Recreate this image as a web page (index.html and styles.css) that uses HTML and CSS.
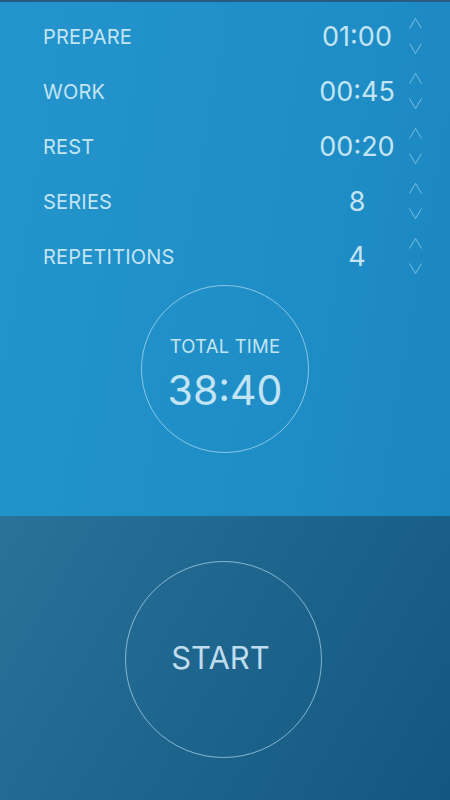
FILE: index.html
```html
<!DOCTYPE html>
<html lang="en">
<head>
    <meta charset="UTF-8">
    <title>Interval Timer</title>
    <link rel="stylesheet" href="styles.css">
</head>
<body>
<div class="app">
    <div class="setup">
        <ul class="rows">
            <li class="row">
                <span class="label">PREPARE</span>
                <span class="value">01:00</span>
                <span class="arrows">
                    <svg class="chev" viewBox="0 0 13 11"><polyline points="0.5,10.5 6.5,0.5 12.5,10.5"/></svg>
                    <svg class="chev" viewBox="0 0 13 11"><polyline points="0.5,0.5 6.5,10.5 12.5,0.5"/></svg>
                </span>
            </li>
            <li class="row">
                <span class="label">WORK</span>
                <span class="value">00:45</span>
                <span class="arrows">
                    <svg class="chev" viewBox="0 0 13 11"><polyline points="0.5,10.5 6.5,0.5 12.5,10.5"/></svg>
                    <svg class="chev" viewBox="0 0 13 11"><polyline points="0.5,0.5 6.5,10.5 12.5,0.5"/></svg>
                </span>
            </li>
            <li class="row">
                <span class="label">REST</span>
                <span class="value">00:20</span>
                <span class="arrows">
                    <svg class="chev" viewBox="0 0 13 11"><polyline points="0.5,10.5 6.5,0.5 12.5,10.5"/></svg>
                    <svg class="chev" viewBox="0 0 13 11"><polyline points="0.5,0.5 6.5,10.5 12.5,0.5"/></svg>
                </span>
            </li>
            <li class="row">
                <span class="label">SERIES</span>
                <span class="value">8</span>
                <span class="arrows">
                    <svg class="chev" viewBox="0 0 13 11"><polyline points="0.5,10.5 6.5,0.5 12.5,10.5"/></svg>
                    <svg class="chev" viewBox="0 0 13 11"><polyline points="0.5,0.5 6.5,10.5 12.5,0.5"/></svg>
                </span>
            </li>
            <li class="row">
                <span class="label">REPETITIONS</span>
                <span class="value">4</span>
                <span class="arrows">
                    <svg class="chev" viewBox="0 0 13 11"><polyline points="0.5,10.5 6.5,0.5 12.5,10.5"/></svg>
                    <svg class="chev" viewBox="0 0 13 11"><polyline points="0.5,0.5 6.5,10.5 12.5,0.5"/></svg>
                </span>
            </li>
        </ul>
        <div class="total">
            <span class="total-label">TOTAL TIME</span>
            <span class="total-value">38:40</span>
        </div>
    </div>
    <div class="launch">
        <a href="javascript:;" class="start">START</a>
    </div>
</div>
</body>
</html>
```

FILE: styles.css
```css
@charset "UTF-8";
/* reset */
body,ul,li{margin:0;padding:0}
ul{list-style:none}
a{text-decoration:none}
body{font-family: Inter, "Liberation Sans", sans-serif;color:#c3e4f5;}

.app{
    width:450px;
    height:800px;
    display:flex;
    flex-direction:column;
    overflow:hidden;
}
.setup{
    height:514px;
    border-top:2px solid #2b5b7c;
    background: linear-gradient(100deg, #2394cc 0%, #1f8ec7 60%, #1b86c0 100%);
    display:flex;
    flex-direction:column;
}
.rows{
    padding-top:7px;
}
.row{
    height:55px;
    display:flex;
    align-items:center;
    padding:0 28px 0 43px;
}
.label{
    flex:1;
    font-size:20px;
    letter-spacing:0.2px;
}
.value{
    width:100px;
    text-align:center;
    font-size:27px;
    margin-top:-1px;
}
.arrows{
    width:13px;
    margin-left:2px;
    display:flex;
    flex-direction:column;
    gap:14px;
    margin-top:-1px;
}
.chev{
    width:13px;
    height:11px;
    display:block;
}
.chev polyline{
    fill:none;
    stroke:rgba(200,232,248,0.55);
    stroke-width:1;
}

.total{
    width:166px;
    height:166px;
    margin:1px auto 0;
    border:1px solid rgba(205,235,250,0.6);
    border-radius:50%;
    display:flex;
    flex-direction:column;
    align-items:center;
    justify-content:center;
}
.total-label{
    font-size:18.5px;
    letter-spacing:0.2px;
    margin-top:11px;
}
.total-value{
    font-size:41px;
    line-height:48px;
    margin-top:9px;
}

.launch{
    flex:1;
    background: linear-gradient(120deg, #2a7298 0%, #1f668f 45%, #12577f 100%);
    display:flex;
    align-items:center;
    justify-content:center;
    padding-top:2px;
}
.start{
    width:197px;
    height:197px;
    border:1.5px solid rgba(190,222,240,0.65);
    border-radius:50%;
    display:flex;
    align-items:center;
    justify-content:center;
    font-size:31px;
    color:#c0dded;
    margin-left:-3px;
    padding-right:6px;
    padding-bottom:3px;
    box-sizing:border-box;
}
```
